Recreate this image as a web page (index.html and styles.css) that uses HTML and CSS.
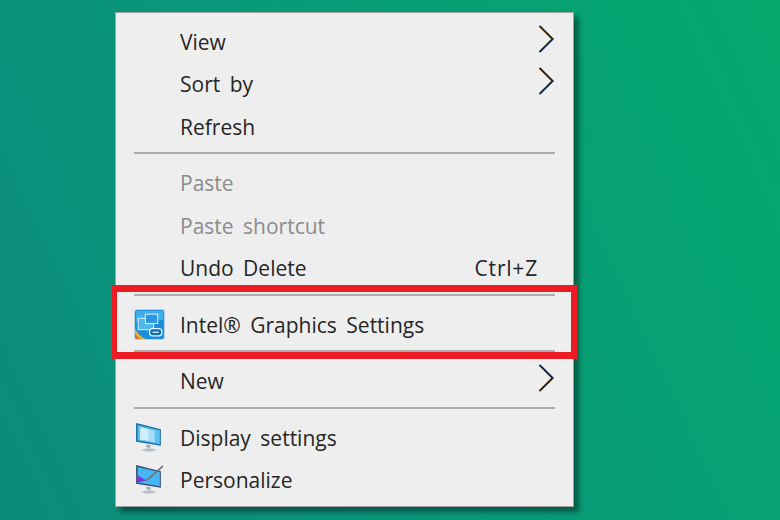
FILE: index.html
```html
<!DOCTYPE html>
<html lang="en">
<head>
    <meta charset="UTF-8">
    <title>Desktop context menu</title>
    <link rel="stylesheet" href="styles.css">
</head>
<body>
    <div class="menu">
        <div class="item"><span class="label">View</span>
            <svg class="arrow" viewBox="0 0 16 28"><polyline class="fringe-a" points="1,1 14,14 1,27"/><polyline class="fringe-b" points="2,1 15,14 2,27"/><polyline class="stroke" points="1.5,1 14.5,14 1.5,27"/></svg>
        </div>
        <div class="item"><span class="label">Sort by</span>
            <svg class="arrow" viewBox="0 0 16 28"><polyline class="fringe-a" points="1,1 14,14 1,27"/><polyline class="fringe-b" points="2,1 15,14 2,27"/><polyline class="stroke" points="1.5,1 14.5,14 1.5,27"/></svg>
        </div>
        <div class="item"><span class="label">Refresh</span></div>
        <div class="sep"></div>
        <div class="item disabled"><span class="label">Paste</span></div>
        <div class="item disabled"><span class="label">Paste shortcut</span></div>
        <div class="item"><span class="label">Undo Delete</span><span class="shortcut">Ctrl+Z</span></div>
        <div class="sep"></div>
        <div class="item">
            <svg class="icon" viewBox="0 0 30 30">
                <rect x="0" y="0" width="30" height="30" rx="3" fill="#b9d3e2"/>
                <rect x="1" y="1" width="28" height="28" rx="2" fill="#1b8fdc"/>
                <path d="M1 19 L1 27 Q1 29 3 29 L11 29 Q5 26 1 19Z" fill="#e0b13c"/>
                <path d="M1 24 L1 27 Q1 29 3 29 L6 29 Q3 27 1 24Z" fill="#d9683a"/>
                <path d="M2 2 H28 V11 Q14 7 2 13Z" fill="#3fb0ec"/>
                <rect x="4" y="9" width="15" height="11" fill="#4fb6ee" stroke="#d8effb" stroke-width="1"/>
                <rect x="11" y="5" width="12" height="9" fill="#2a97e0" stroke="#d8effb" stroke-width="1"/>
                <rect x="15" y="19" width="12" height="7" rx="3" fill="#0f6fb8" stroke="#e4f4fc" stroke-width="1.2"/>
                <path d="M18 22.5 H24" stroke="#e4f4fc" stroke-width="1.2"/>
            </svg>
            <span class="label">Intel® Graphics Settings</span>
        </div>
        <div class="sep"></div>
        <div class="item"><span class="label">New</span>
            <svg class="arrow" viewBox="0 0 16 28"><polyline class="fringe-a" points="1,1 14,14 1,27"/><polyline class="fringe-b" points="2,1 15,14 2,27"/><polyline class="stroke" points="1.5,1 14.5,14 1.5,27"/></svg>
        </div>
        <div class="sep"></div>
        <div class="item">
            <svg class="icon" viewBox="0 0 30 30">
                <path d="M2 1 L26 7 V23 L2 19Z" fill="#1d6f9f"/>
                <path d="M3.5 3 L25 8 V21.5 L3.5 18Z" fill="#5cc1f2"/>
                <path d="M6 5 L20 8.5 V19.5 L6 17Z" fill="#a4def8"/>
                <path d="M6 5 L14 7 V18 L6 17Z" fill="#d3effc"/>
                <path d="M12 22 L16 22.5 V25 L12 24.5Z" fill="#9aa5ab"/>
                <path d="M7 27 Q14 24 22 27 Q14 30 7 27Z" fill="#b8c0c5"/>
            </svg>
            <span class="label">Display settings</span>
        </div>
        <div class="item">
            <svg class="icon" viewBox="0 0 30 30">
                <path d="M2 1 L26 7 V23 L2 19Z" fill="#3a4f78"/>
                <path d="M3.5 3 L25 8 V21.5 L3.5 18Z" fill="#45b5f3"/>
                <path d="M3.5 11 L12 16 L3.5 18Z" fill="#7b35d8"/>
                <path d="M12 16 L28 2" stroke="#6d7478" stroke-width="1.6"/>
                <path d="M12 22 L16 22.5 V25 L12 24.5Z" fill="#9aa5ab"/>
                <path d="M7 27 Q14 24 22 27 Q14 30 7 27Z" fill="#b8c0c5"/>
            </svg>
            <span class="label">Personalize</span>
        </div>
        <div class="highlight"></div>
    </div>
</body>
</html>
```

FILE: styles.css
```css
html, body {
    margin: 0;
    padding: 0;
}
body {
    width: 780px;
    height: 520px;
    overflow: hidden;
    box-sizing: border-box;
    padding: 12px 0 0 115px;
    background: linear-gradient(65deg, #0c8a7b 0%, #09987a 45%, #04a96d 100%);
    font-family: "Open Sans", "Noto Sans", sans-serif;
}
.menu {
    position: relative;
    width: 459px;
    height: 495px;
    box-sizing: border-box;
    padding: 7.5px 0 4px;
    background-color: #eeeeee;
    border: 1px solid #a0a0a0;
    box-shadow: 5px 5px 5px rgba(0, 0, 0, 0.42);
    color: #262626;
    font-size: 21px;
    word-spacing: 4px;
}
.item {
    position: relative;
    display: flex;
    align-items: center;
    height: 42.5px;
    padding: 0 19px 0 64px;
}
.label {
    white-space: nowrap;
}
.disabled {
    color: #8c8c8c;
}
.shortcut {
    margin-left: auto;
    margin-right: 16px;
    letter-spacing: 0.8px;
}
.arrow {
    width: 16px;
    height: 28px;
    margin-left: auto;
    margin-top: -6px;
    overflow: visible;
}
.arrow polyline {
    fill: none;
    stroke-width: 1.6;
}
.arrow .stroke {
    stroke: #1a1a1a;
}
.arrow .fringe-a {
    stroke: #e8a050;
}
.arrow .fringe-b {
    stroke: #3f7fd0;
}
.icon {
    position: absolute;
    left: 18px;
    top: 5px;
    width: 31px;
    height: 31px;
    filter: blur(0.4px);
}
.sep {
    height: 2px;
    margin: 4px 18px 8px;
    background-color: #acacac;
}
.highlight {
    position: absolute;
    left: -4px;
    top: 272px;
    width: 465px;
    height: 74px;
    box-sizing: border-box;
    border-style: solid;
    border-color: #ed1c24;
    border-width: 7px 6px 7px 5px;
}
```
